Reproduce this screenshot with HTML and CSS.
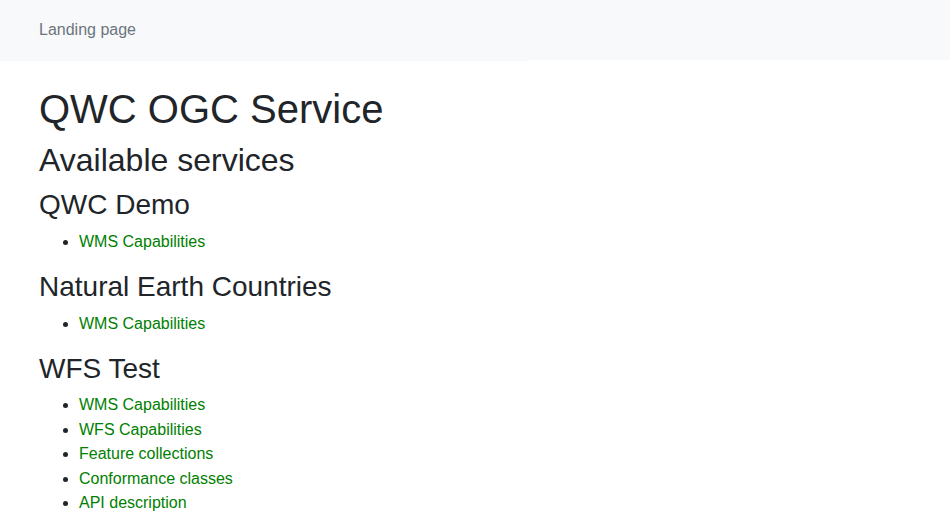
FILE: index.html
```html
<!DOCTYPE html>
<html lang="en">
<head>
<meta charset="utf-8">
<title>QWC OGC Service</title>
<link rel="stylesheet" href="styles.css">
</head>
<body>
<nav class="topbar">
  <div class="crumb">Landing page</div>
</nav>
<main class="content">
  <h1>QWC OGC Service</h1>
  <h2>Available services</h2>
  <h3>QWC Demo</h3>
  <ul>
    <li><a href="#">WMS Capabilities</a></li>
  </ul>
  <h3>Natural Earth Countries</h3>
  <ul>
    <li><a href="#">WMS Capabilities</a></li>
  </ul>
  <h3>WFS Test</h3>
  <ul class="long">
    <li><a href="#">WMS Capabilities</a></li>
    <li><a href="#">WFS Capabilities</a></li>
    <li><a href="#">Feature collections</a></li>
    <li><a href="#">Conformance classes</a></li>
    <li><a href="#">API description</a></li>
  </ul>
</main>
</body>
</html>
```
FILE: styles.css
```css
html, body {
  margin: 0;
  padding: 0;
}
body {
  font-family: "Liberation Sans", Arial, sans-serif;
  font-size: 16px;
  line-height: 1.5;
  color: #212529;
  background: #fff;
}
.topbar {
  background: #f8f9fa;
  height: 60px;
}
.crumb {
  width: 489px;
  height: 43px;
  padding: 18px 0 0 39px;
  background: #f8f9fa;
  color: #6c757d;
}
.content {
  padding: 25px 39px 0 39px;
}
h1, h2, h3 {
  font-weight: 400;
  line-height: 1.2;
  margin: 0 0 8px 0;
}
h1 { font-size: 40px; }
h2 { font-size: 32px; margin-bottom: 9px; }
h3 { font-size: 28px; }
ul {
  margin: 0 0 16px 0;
  padding-left: 40px;
}
ul.long {
  margin-top: 2px;
}
ul.long li {
  line-height: 24.5px;
}
a {
  color: #008000;
  text-decoration: none;
}
```
